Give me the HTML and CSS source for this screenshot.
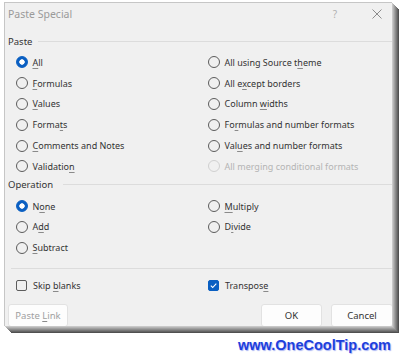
FILE: index.html
```html
<!DOCTYPE html>
<html lang="en">
<head>
    <meta charset="UTF-8">
    <meta name="viewport" content="width=device-width, initial-scale=1.0">
    <title>Paste Special</title>
    <link rel="stylesheet" href="styles.css">
</head>
<body>
    <div class="dialog">
        <div class="titlebar">
            <span class="title">Paste Special</span>
            <span class="help">?</span>
            <span class="close">
                <svg width="10" height="10" viewBox="0 0 10 10"><path d="M0.5 0.5 L9.5 9.5 M9.5 0.5 L0.5 9.5" stroke="#8c8c8c" stroke-width="1" fill="none"/></svg>
            </span>
        </div>

        <div class="group-head">Paste</div>
        <div class="options">
            <label class="opt"><span class="radio on"></span><span><u>A</u>ll</span></label>
            <label class="opt"><span class="radio"></span><span>All using Source t<u>h</u>eme</span></label>
            <label class="opt"><span class="radio"></span><span><u>F</u>ormulas</span></label>
            <label class="opt"><span class="radio"></span><span>All e<u>x</u>cept borders</span></label>
            <label class="opt"><span class="radio"></span><span><u>V</u>alues</span></label>
            <label class="opt"><span class="radio"></span><span>Column <u>w</u>idths</span></label>
            <label class="opt"><span class="radio"></span><span>Forma<u>t</u>s</span></label>
            <label class="opt"><span class="radio"></span><span>Fo<u>r</u>mulas and number formats</span></label>
            <label class="opt"><span class="radio"></span><span><u>C</u>omments and Notes</span></label>
            <label class="opt"><span class="radio"></span><span>Val<u>u</u>es and number formats</span></label>
            <label class="opt"><span class="radio"></span><span>Validatio<u>n</u></span></label>
            <label class="opt disabled"><span class="radio"></span><span>All merging conditional formats</span></label>
        </div>

        <div class="group-head op">Operation</div>
        <div class="options">
            <label class="opt"><span class="radio on"></span><span>N<u>o</u>ne</span></label>
            <label class="opt"><span class="radio"></span><span><u>M</u>ultiply</span></label>
            <label class="opt"><span class="radio"></span><span>A<u>d</u>d</span></label>
            <label class="opt"><span class="radio"></span><span>D<u>i</u>vide</span></label>
            <label class="opt"><span class="radio"></span><span><u>S</u>ubtract</span></label>
        </div>

        <div class="sep"></div>

        <div class="options checks">
            <label class="opt"><span class="check"></span><span>Skip <u>b</u>lanks</span></label>
            <label class="opt"><span class="check on">
                <svg width="9" height="9" viewBox="0 0 9 9"><path d="M1.8 4.7 L3.7 6.5 L7.3 2.6" stroke="#fff" stroke-width="1.1" fill="none"/></svg>
            </span><span>Transpos<u>e</u></span></label>
        </div>

        <div class="buttons">
            <button class="btn link">Paste <u>L</u>ink</button>
            <button class="btn ok">OK</button>
            <button class="btn cancel">Cancel</button>
        </div>
    </div>
    <div class="site">www.OneCoolTip.com</div>
</body>
</html>
```

FILE: styles.css
```css
body {
    margin: 0;
    background: #fff;
    font-family: "Noto Sans", sans-serif;
    font-size: 9px;
    color: #333;
}
.dialog {
    margin: 2px 0 0 4px;
    width: 388px;
    height: 324px;
    box-sizing: border-box;
    border-left: 1px solid #c6c6c6;
    border-top: 1px solid #c6c6c6;
    background: #f0f0f0;
    overflow: hidden;
    box-shadow: 1px 1px 0 #c8c8c8, 2px 2px 0 #b4b4b4, 3px 3px 0 #a0a0a0, 4px 4px 0 #8c8c8c,
        5px 5px 0 #787878, 6px 6px 0 #646464, 7px 7px 0 #505050;
}
.titlebar {
    height: 30px;
    box-sizing: border-box;
    padding: 4px 0 0 3px;
    display: flex;
    align-items: flex-start;
    line-height: 14px;
}
.title {
    flex: 1;
    font-size: 10.5px;
    color: #9a9a9a;
}
.help {
    font-size: 10px;
    color: #b0b0b0;
}
.close {
    margin: 2px 10px 0 35px;
    height: 10px;
}
.group-head {
    height: 16px;
    margin-bottom: 3px;
    padding-left: 3px;
    display: flex;
    align-items: center;
    gap: 6px;
    font-size: 9.5px;
}
.group-head::after {
    content: "";
    flex: 1;
    height: 1px;
    background: #dcdcdc;
}
.group-head.op {
    gap: 10px;
}
.options {
    display: grid;
    grid-template-columns: 192px 1fr;
    grid-auto-rows: 20.8px;
    padding-left: 10.5px;
}
.opt {
    display: flex;
    align-items: center;
    gap: 5px;
    white-space: nowrap;
}
.opt.disabled {
    color: #b4b4b4;
}
u {
    text-underline-offset: 1.5px;
    text-decoration-thickness: 1px;
    text-decoration-color: #8a8a8a;
}
.radio {
    width: 12px;
    height: 12px;
    box-sizing: border-box;
    border: 1px solid #5c5c5c;
    border-radius: 50%;
    flex: none;
}
.radio.on {
    border-color: #0a5fc2;
    background: radial-gradient(circle, #fff 2.4px, #0a5fc2 3px);
}
.disabled .radio {
    border-color: #d0d0d0;
}
.sep {
    height: 1px;
    margin: 10px 0 0 6px;
    background: #dcdcdc;
}
.checks {
    grid-auto-rows: 20px;
    margin-top: 6px;
    padding-left: 11px;
}
.checks .opt {
    gap: 6px;
}
.check {
    width: 11px;
    height: 11px;
    box-sizing: border-box;
    border: 1px solid #5c5c5c;
    border-radius: 2px;
    flex: none;
    display: flex;
    align-items: center;
    justify-content: center;
}
.check.on {
    background: #0a5fc2;
    border-color: #0a5fc2;
}
.buttons {
    display: flex;
    margin: 9px -1px 0 0;
    padding-left: 3px;
}
.btn {
    height: 23px;
    box-sizing: border-box;
    border: 1px solid #e2e2e2;
    border-radius: 3px;
    background: #fdfdfd;
    font-family: "Noto Sans", sans-serif;
    font-size: 9.5px;
    color: #333;
    padding: 0;
}
.btn.link {
    width: 60px;
    color: #a0a0a0;
}
.btn.ok {
    width: 61px;
    margin-left: auto;
}
.btn.cancel {
    width: 62px;
    margin-left: 9px;
}
.site {
    margin-top: 9px;
    padding-right: 9px;
    text-align: right;
    font-family: "Liberation Sans", Arial, sans-serif;
    font-weight: bold;
    font-size: 14.5px;
    line-height: 20px;
    color: #1e3fdc;
    text-shadow: 1px 1px 1px #a8b4f4;
}
```
